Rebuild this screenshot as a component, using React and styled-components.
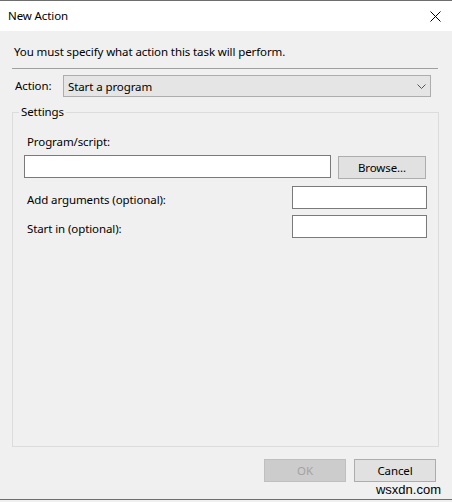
import React from "react";
import styled, { createGlobalStyle } from "styled-components";

const GlobalStyle = createGlobalStyle`
  html, body {
    margin: 0;
    padding: 0;
    background: #f0f0f0;
  }
  body {
    font-family: "Noto Sans", "Open Sans", sans-serif;
    font-size: 11.5px;
    letter-spacing: -0.1px;
    color: #000;
  }
`;

const Window = styled.div`
  position: relative;
  width: 452px;
  height: 500px;
  box-sizing: border-box;
  display: flex;
  flex-direction: column;
  border-top: 1px solid #6e6e6e;
  border-bottom: 1px solid #6e6e6e;
  background: #f0f0f0;
`;

const TitleBar = styled.div`
  height: 30px;
  flex: none;
  display: flex;
  align-items: center;
  justify-content: space-between;
  padding: 0 11px 0 8px;
  background: #fff;
`;

const Title = styled.span`
  line-height: 16px;
`;

const CloseIcon = () => (
  <svg width="11" height="11" viewBox="0 0 11 11">
    <path d="M0.5 0.5 L10.5 10.5 M10.5 0.5 L0.5 10.5" stroke="#000" strokeWidth="1" fill="none" />
  </svg>
);

const Body = styled.div`
  flex: 1;
  display: flex;
  flex-direction: column;
  padding: 13px 13px 17px 12px;
  min-height: 0;
`;

const Instruction = styled.div`
  line-height: 16px;
  padding-left: 2px;
`;

const Separator = styled.div`
  margin: 8px 1px 0 0;
  border-top: 1px solid #a0a0a0;
`;

const ActionRow = styled.div`
  display: flex;
  align-items: center;
  margin: 6px 8px 0 0;
`;

const ActionLabel = styled.span`
  width: 48px;
  padding-left: 3px;
  line-height: 16px;
`;

const Combo = styled.div`
  flex: 1;
  height: 22px;
  box-sizing: border-box;
  display: flex;
  align-items: center;
  justify-content: space-between;
  padding: 0 4px 0 4px;
  border: 1px solid #adadad;
  background: #e5e5e5;
`;

const Chevron = () => (
  <svg width="9" height="5" viewBox="0 0 9 5">
    <path d="M0.5 0.5 L4.5 4.5 L8.5 0.5" stroke="#555" strokeWidth="1" fill="none" />
  </svg>
);

const GroupBox = styled.fieldset`
  flex: 1;
  margin: 7px 0 0 0;
  padding: 0 11px 0 6px;
  min-width: 0;
  border: 1px solid #dcdcdc;
  display: flex;
  flex-direction: column;
`;

const Legend = styled.legend`
  padding: 0 2px;
  line-height: 16px;
`;

const GroupContent = styled.div`
  padding-left: 5px;
  display: flex;
  flex-direction: column;
`;

const FieldLabel = styled.div`
  padding-left: 3px;
  line-height: 16px;
  margin-top: ${(p) => p.$top || 0}px;
`;

const Row = styled.div`
  display: flex;
  align-items: ${(p) => (p.$center ? "center" : "flex-start")};
  gap: 7px;
  margin-top: ${(p) => p.$top || 0}px;
`;

const RowLabel = styled.span`
  flex: 1;
  padding-left: 3px;
  line-height: 16px;
  position: relative;
  top: 2px;
`;

const TextBox = styled.div`
  box-sizing: border-box;
  height: 23px;
  width: ${(p) => (p.$width ? `${p.$width}px` : "auto")};
  flex: ${(p) => (p.$width ? "none" : 1)};
  border: 1px solid #7a7a7a;
  background: #fff;
`;

const Button = styled.div`
  box-sizing: border-box;
  width: ${(p) => p.$width}px;
  height: 23px;
  display: flex;
  align-items: center;
  justify-content: center;
  margin-top: ${(p) => p.$top || 0}px;
  margin-right: ${(p) => p.$right || 0}px;
  border: 1px solid ${(p) => (p.$disabled ? "#bfbfbf" : "#adadad")};
  background: ${(p) => (p.$disabled ? "#cccccc" : "#e1e1e1")};
  color: ${(p) => (p.$disabled ? "#a3a3a3" : "#000")};
  line-height: 16px;
`;

const ButtonRow = styled.div`
  display: flex;
  justify-content: flex-end;
  gap: 8px;
  margin-top: 12px;
  padding-right: 3px;
`;

const Watermark = styled.span`
  position: absolute;
  right: 11px;
  bottom: 1px;
  font-family: "Liberation Sans", Arial, sans-serif;
  font-size: 13px;
  letter-spacing: 0;
  line-height: 16px;
  color: #000;
`;

export default function App() {
  return (
    <>
      <GlobalStyle />
      <Window>
        <TitleBar>
          <Title>New Action</Title>
          <CloseIcon />
        </TitleBar>
        <Body>
          <Instruction>You must specify what action this task will perform.</Instruction>
          <Separator />
          <ActionRow>
            <ActionLabel>Action:</ActionLabel>
            <Combo>
              <span>Start a program</span>
              <Chevron />
            </Combo>
          </ActionRow>
          <GroupBox>
            <Legend>Settings</Legend>
            <GroupContent>
              <FieldLabel $top={14}>Program/script:</FieldLabel>
              <Row $top={5}>
                <TextBox />
                <Button $width={88} $top={1} $right={1}>Browse...</Button>
              </Row>
              <Row $top={7} $center>
                <RowLabel>Add arguments (optional):</RowLabel>
                <TextBox $width={135} />
              </Row>
              <Row $top={6} $center>
                <RowLabel>Start in (optional):</RowLabel>
                <TextBox $width={135} />
              </Row>
            </GroupContent>
          </GroupBox>
          <ButtonRow>
            <Button $width={82} $disabled>OK</Button>
            <Button $width={82}>Cancel</Button>
          </ButtonRow>
        </Body>
        <Watermark>wsxdn.com</Watermark>
      </Window>
    </>
  );
}
